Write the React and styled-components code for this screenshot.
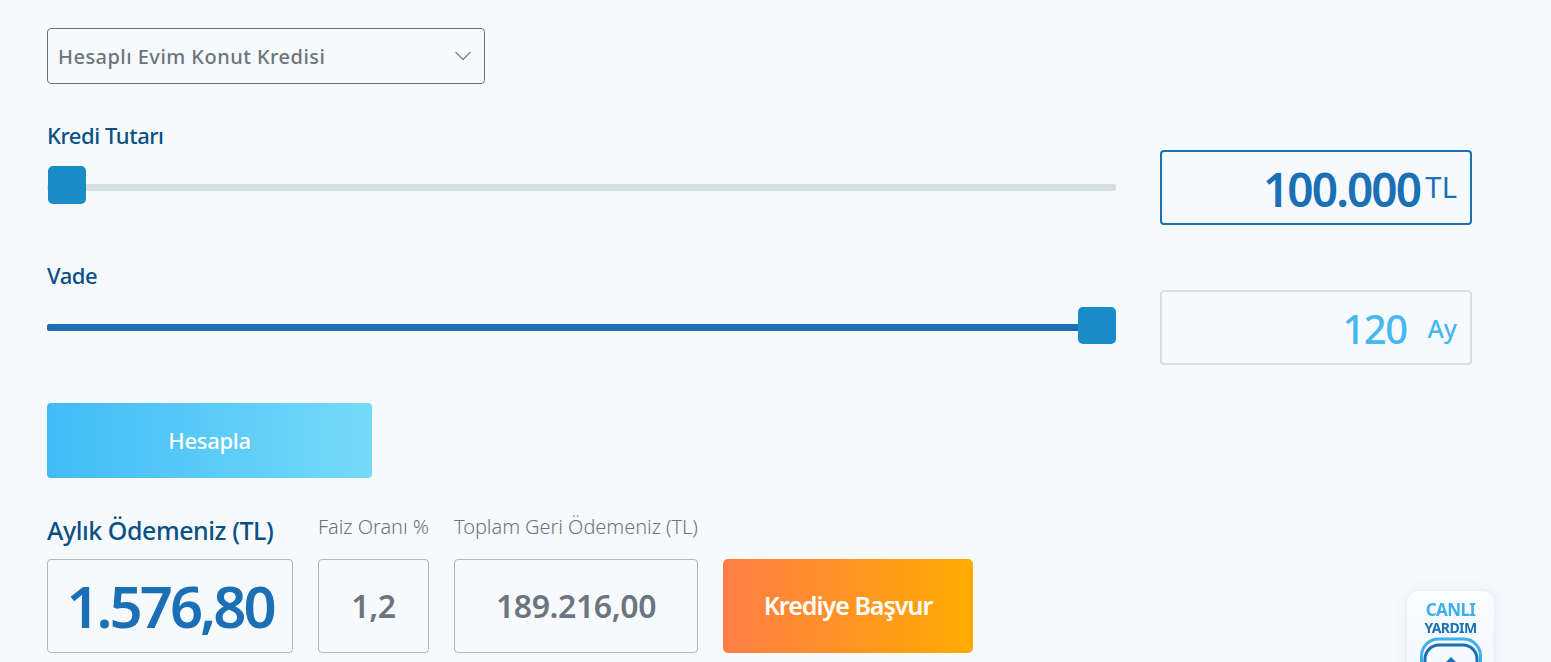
import React from "react";
import styled, { createGlobalStyle } from "styled-components";
import { ChevronDown } from "lucide-react";

const GlobalStyle = createGlobalStyle`
  html, body {
    margin: 0;
    height: 662px;
    overflow: hidden;
    background: #f6fafd;
    font-family: "Noto Sans", "Open Sans", sans-serif;
  }
`;

const Page = styled.div`
  box-sizing: border-box;
  height: 662px;
  padding: 28px 79px 0 47px;
  display: flex;
  flex-direction: column;
`;

const Select = styled.div`
  box-sizing: border-box;
  width: 438px;
  height: 56px;
  border: 1px solid #6c757d;
  border-radius: 4px;
  padding: 0 7px 0 10px;
  display: flex;
  align-items: center;
  justify-content: space-between;
  color: #6c757d;
  font-size: 20px;
  font-weight: 500;
  letter-spacing: 0.47px;
  svg {
    color: #7b848b;
  }
`;

const SliderRow = styled.div`
  display: grid;
  grid-template-columns: 1069px 312px;
  column-gap: 44px;
  align-items: start;
  margin-top: ${(p) => p.$top}px;
`;

const SliderCol = styled.div`
  display: flex;
  flex-direction: column;
`;

const Label = styled.div`
  color: #0b5084;
  font-size: 22px;
  height: 28px;
  line-height: 25px;
  font-weight: 500;
  letter-spacing: -0.45px;
`;

const Track = styled.div`
  position: relative;
  height: 7px;
  margin-top: 33px;
  border-radius: 2px;
  background: ${(p) => (p.$filled ? "#1a6fb5" : "#d6dfe4")};
`;

const Thumb = styled.div`
  position: absolute;
  top: ${(p) => p.$top}px;
  ${(p) => (p.$end ? "right: 0;" : "left: 1px;")}
  width: 38px;
  height: ${(p) => p.$size}px;
  border-radius: 5px;
  background: #1a8dc8;
`;

const ValueBox = styled.div`
  box-sizing: border-box;
  height: 75px;
  margin-top: 27px;
  border: 2px solid ${(p) => (p.$active ? "#1a6fb5" : "#d9e0e5")};
  border-radius: 4px;
  padding: 0 13px;
  display: flex;
  align-items: center;
  justify-content: flex-end;
  color: ${(p) => (p.$active ? "#1a6fb5" : "#45b8f0")};
`;

const Amount = styled.span`
  font-size: ${(p) => p.$size}px;
  font-weight: ${(p) => p.$weight};
  margin-top: ${(p) => p.$drop}px;
  letter-spacing: ${(p) => p.$track}px;
`;

const Unit = styled.span`
  font-size: ${(p) => p.$size}px;
  font-weight: ${(p) => p.$weight};
  margin-left: ${(p) => p.$gap}px;
  margin-top: ${(p) => p.$drop}px;
  margin-right: ${(p) => -p.$track}px;
  letter-spacing: ${(p) => p.$track}px;
`;

const CalcButton = styled.div`
  box-sizing: border-box;
  width: 325px;
  height: 75px;
  margin-top: 38px;
  padding-bottom: 2px;
  border-radius: 4px;
  background: linear-gradient(90deg, #41bbf6, #74daf9);
  color: #fff;
  font-size: 22px;
  font-weight: 500;
  letter-spacing: -0.3px;
  display: flex;
  align-items: center;
  justify-content: center;
`;

const Results = styled.div`
  display: flex;
  gap: 25px;
  margin-top: 33px;
  align-items: flex-end;
`;

const ResultCol = styled.div`
  display: flex;
  flex-direction: column;
  width: ${(p) => p.$width}px;
`;

const ResultHead = styled.div`
  height: 48px;
  white-space: nowrap;
  color: ${(p) => (p.$main ? "#0b5084" : "#6c757d")};
  font-size: ${(p) => (p.$main ? 25 : 20)}px;
  line-height: ${(p) => (p.$main ? 38 : 32)}px;
  font-weight: ${(p) => (p.$main ? 500 : 300)};
  letter-spacing: ${(p) => (p.$main ? -0.45 : -0.05)}px;
`;

const ResultBox = styled.div`
  box-sizing: border-box;
  height: 94px;
  padding-bottom: 2px;
  border: 1px solid #b1b7bc;
  border-radius: 4px;
  display: flex;
  align-items: center;
  justify-content: center;
  white-space: nowrap;
  color: ${(p) => (p.$main ? "#1a6fb5" : "#6c757d")};
  font-size: ${(p) => (p.$main ? 58 : 32)}px;
  font-weight: 600;
  letter-spacing: ${(p) => (p.$main ? -3 : -0.4)}px;
`;

const ApplyButton = styled.div`
  box-sizing: border-box;
  width: 250px;
  height: 94px;
  padding-bottom: 2px;
  border-radius: 5px;
  background: linear-gradient(90deg, #ff7d46, #ffab00);
  color: #fff;
  font-size: 25px;
  font-weight: 600;
  letter-spacing: -1px;
  display: flex;
  align-items: center;
  justify-content: center;
`;

const HelpWidget = styled.div`
  position: fixed;
  left: 1406px;
  top: 590px;
  box-sizing: border-box;
  width: 89px;
  height: 120px;
  padding-top: 9px;
  border: 1px solid #e6eef6;
  border-radius: 12px;
  background: linear-gradient(180deg, #fbfdff, #eff6fd);
  box-shadow: 0 0 14px rgba(120, 160, 200, 0.14);
  display: flex;
  flex-direction: column;
  align-items: center;
`;

const HelpTop = styled.div`
  color: #3cb0ea;
  font-size: 17px;
  line-height: 19px;
  font-weight: 700;
  letter-spacing: -0.6px;
`;

const HelpBottom = styled.div`
  color: #1a6fb5;
  font-size: 14px;
  line-height: 17px;
  font-weight: 700;
  letter-spacing: -0.6px;
  margin-bottom: 1px;
`;

export default function App() {
  return (
    <Page>
      <GlobalStyle />
      <Select>
        Hesaplı Evim Konut Kredisi
        <ChevronDown size={28} strokeWidth={1.2} />
      </Select>

      <SliderRow $top={39}>
        <SliderCol>
          <Label>Kredi Tutarı</Label>
          <Track>
            <Thumb $top={-18} $size={38} />
          </Track>
        </SliderCol>
        <ValueBox $active>
          <Amount $size={46} $weight={600} $drop={3} $track={-1.9}>100.000</Amount>
          <Unit $size={29} $weight={400} $gap={5} $drop={-2} $track={0.5}>TL</Unit>
        </ValueBox>
      </SliderRow>

      <SliderRow $top={38}>
        <SliderCol>
          <Label>Vade</Label>
          <Track $filled>
            <Thumb $end $top={-17} $size={37} />
          </Track>
        </SliderCol>
        <ValueBox>
          <Amount $size={40} $weight={500} $drop={2} $track={-1.6}>120</Amount>
          <Unit $size={25} $weight={500} $gap={21} $drop={1} $track={0}>Ay</Unit>
        </ValueBox>
      </SliderRow>

      <CalcButton>Hesapla</CalcButton>

      <Results>
        <ResultCol $width={246}>
          <ResultHead $main>Aylık Ödemeniz (TL)</ResultHead>
          <ResultBox $main>1.576,80</ResultBox>
        </ResultCol>
        <ResultCol $width={111}>
          <ResultHead>Faiz Oranı %</ResultHead>
          <ResultBox>1,2</ResultBox>
        </ResultCol>
        <ResultCol $width={244}>
          <ResultHead>Toplam Geri Ödemeniz (TL)</ResultHead>
          <ResultBox>189.216,00</ResultBox>
        </ResultCol>
        <ApplyButton>Krediye Başvur</ApplyButton>
      </Results>

      <HelpWidget>
        <HelpTop>CANLI</HelpTop>
        <HelpBottom>YARDIM</HelpBottom>
        <svg width="62" height="60" viewBox="0 0 62 60" fill="none">
          <rect x="1.5" y="2" width="59" height="56" rx="17" stroke="#3cb0ea" strokeWidth="3" />
          <rect x="5" y="8" width="52" height="48" rx="14" stroke="#1a6fb5" strokeWidth="3" />
          <path d="M31 20l8 8H23z" fill="#1a6fb5" />
        </svg>
      </HelpWidget>
    </Page>
  );
}
